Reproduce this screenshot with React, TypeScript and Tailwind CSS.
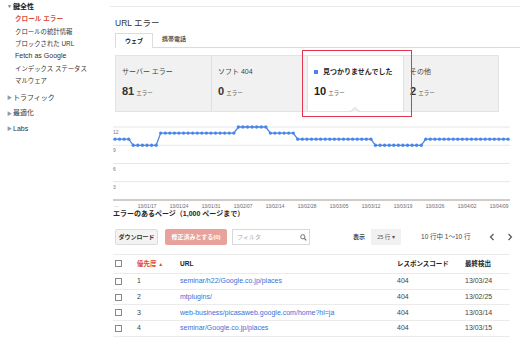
import React from 'react';

// One dot per day; [count, value] segments read off the chart
const segments: [number, number][] = [
  [4, 10], [6, 9], [17, 11], [7, 12], [6, 11], [17, 10], [11, 9], [19, 10],
];
const series: number[] = segments.flatMap(([n, v]) => Array(n).fill(v));

const xLabels = [
  '13/01/17', '13/01/24', '13/01/31', '13/02/07', '13/02/14', '13/02/28',
  '13/03/05', '13/03/12', '13/03/19', '13/03/26', '13/04/02', '13/04/09',
];

const rows = [
  { n: 1, url: 'seminar/h22/Google.co.jp/places', code: '404', date: '13/03/24' },
  { n: 2, url: 'mtplugins/', code: '404', date: '13/02/25' },
  { n: 3, url: 'web-business/picasaweb.google.com/home?hl=ja', code: '404', date: '13/03/14' },
  { n: 4, url: 'seminar/Google.co.jp/places', code: '404', date: '13/03/15' },
];

function Sidebar() {
  const sub = ['クロールの統計情報', 'ブロックされた URL', 'Fetch as Google', 'インデックス ステータス', 'マルウェア'];
  return (
    <div className="w-[110px] shrink-0 text-[7px] text-[#333] pt-[1px]">
      <div className="h-[12px] flex items-center pl-[7px] font-bold text-[#222]">
        <span className="text-[5px] text-[#777] w-[6px]">▼</span>鍵全性
      </div>
      <div className="h-[12.4px] flex items-center pl-[15px] font-bold text-[#dd4b39] text-[6.6px]">クロール エラー</div>
      {sub.map((s) => (
        <div key={s} className={`h-[12.4px] flex items-center pl-[15px] ${s.startsWith('Fetch') ? '' : 'text-[6.4px]'}`}>{s}</div>
      ))}
      {['トラフィック', '最適化', 'Labs'].map((s, i) => (
        <div key={s} className={`h-[15.5px] flex items-center pl-[7px] ${i === 0 ? 'mt-[3px]' : ''}`}>
          <span className="text-[5px] text-[#999] w-[6px]">▶</span>{s}
        </div>
      ))}
    </div>
  );
}

function Cards() {
  return (
    <div className="ml-[5px] mt-[7px] w-[384px] h-[57px] flex bg-[#f1f1f1] border border-[#e3e3e3]">
      <div className="w-[96px] border-r border-[#e0e0e0] pl-[6px] pt-[11px]">
        <div className="text-[7px] text-[#444] leading-[10px]">サーバー エラー</div>
        <div className="mt-[6px] flex items-baseline"><span className="text-[11px] font-bold text-[#333]">81</span><span className="text-[5.5px] text-[#666] ml-[2px]">エラー</span></div>
      </div>
      <div className="w-[96px] border-r border-[#e0e0e0] pl-[6px] pt-[11px]">
        <div className="text-[7px] text-[#444] leading-[10px]">ソフト 404</div>
        <div className="mt-[6px] flex items-baseline"><span className="text-[11px] font-bold text-[#333]">0</span><span className="text-[5.5px] text-[#666] ml-[2px]">エラー</span></div>
      </div>
      <div className="relative w-[96px] bg-white border-r border-[#e0e0e0] pl-[6px] pt-[11px]">
        <div className="text-[7px] font-bold text-[#222] leading-[10px] flex items-center">
          <span className="w-[4px] h-[4px] bg-[#4a86e8] mr-[5px]" />見つかりませんでした
        </div>
        <div className="mt-[6px] flex items-baseline"><span className="text-[11px] font-bold text-[#222]">10</span><span className="text-[5.5px] text-[#666] ml-[2px]">エラー</span></div>
        <svg className="absolute left-[42px] bottom-[-1px]" width="10" height="5" viewBox="0 0 10 5">
          <path d="M0 5 L5 0.5 L10 5" fill="#f1f1f1" stroke="#d6d6d6" strokeWidth="1" />
        </svg>
      </div>
      <div className="flex-1 pl-[6px] pt-[11px]">
        <div className="text-[7px] text-[#444] leading-[10px]">その他</div>
        <div className="mt-[6px] flex items-baseline"><span className="text-[11px] font-bold text-[#333]">2</span><span className="text-[5.5px] text-[#666] ml-[2px]">エラー</span></div>
      </div>
    </div>
  );
}

function Chart() {
  const px = (i: number) => 5 + i * 4.57;
  const py = (v: number) => 82 - v * 6.083;
  const pts = series.map((v, i) => `${px(i).toFixed(1)},${py(v).toFixed(1)}`).join(' ');
  return (
    <svg width="410" height="92" className="block mt-[6px]">
      {[12, 9, 6, 3].map((v) => (
        <g key={v}>
          <line x1="3" x2="400" y1={py(v)} y2={py(v)} stroke="#e6e6e6" strokeWidth="1" />
          <text x="3" y={py(v) + 7} fontSize="5" fill="#777">{v}</text>
        </g>
      ))}
      <line x1="3" x2="400" y1="82" y2="82" stroke="#9a9a9a" strokeWidth="1" />
      <text x="4" y="89" fontSize="5" fill="#777">...</text>
      {xLabels.map((l, k) => (
        <text key={l} x={37 + 32 * k} y="90" fontSize="4.8" fill="#666" textAnchor="middle">{l}</text>
      ))}
      <polyline points={pts} fill="none" stroke="#4a86e8" strokeWidth="1.3" />
      {series.map((v, i) => (
        <circle key={i} cx={px(i)} cy={py(v)} r="1.7" fill="#4a86e8" />
      ))}
    </svg>
  );
}

function Checkbox() {
  return <span className="block w-[7px] h-[7px] border border-[#888] bg-white" />;
}

function Table() {
  return (
    <div className="mt-[8px] ml-[3px] w-[397px] text-[7px]">
      <div className="grid grid-cols-[22px_44px_216px_68px_1fr] h-[20px] items-center border-t border-b border-[#ebebeb] font-bold text-[6.5px] text-[#222]">
        <div className="pl-[2px]"><Checkbox /></div>
        <div className="pl-[2px] text-[#dd4b39]">優先度 <span className="text-[5px]">▲</span></div>
        <div className="pl-[1px]">URL</div>
        <div className="pl-[2px]">レスポンスコード</div>
        <div className="pl-[2px]">最終検出</div>
      </div>
      {rows.map((r) => (
        <div key={r.n} className="grid grid-cols-[22px_44px_216px_68px_1fr] h-[15.8px] items-center border-b border-[#ebebeb] text-[#444]">
          <div className="pl-[2px]"><Checkbox /></div>
          <div className="pl-[2px]">{r.n}</div>
          <div className="pl-[1px] text-[#3a6fd8] whitespace-nowrap">{r.url}</div>
          <div className="pl-[2px]">{r.code}</div>
          <div className="pl-[2px]">{r.date}</div>
        </div>
      ))}
    </div>
  );
}

export default function App() {
  return (
    <div className="relative w-[520px] h-[337px] overflow-hidden bg-white flex font-['Liberation_Sans','Noto_Sans_CJK_JP',sans-serif]">
      <Sidebar />
      <div className="flex-1 flex flex-col">
        <div className="h-[7px] border-b border-[#ebebeb]" />
        <div className="mt-[11px] ml-[5px] text-[8.5px] leading-[10px] text-[#333]">URL エラー</div>
        {/* Tabs */}
        <div className="mt-[5px] ml-[5px] h-[15px] flex items-end border-b border-[#dcdcdc]">
          <div className="w-[38px] h-[15px] bg-white border border-b-0 border-[#dcdcdc] mb-[-1px] flex items-center justify-center text-[6px] font-bold text-[#222]">ウェブ</div>
          <div className="ml-[9px] h-[15px] flex items-center text-[6px] font-bold text-[#555]">携帯電話</div>
        </div>
        <Cards />
        <Chart />
        <div className="ml-[3px] mt-[-1px] text-[7px] font-bold text-[#222] leading-[10px]">エラーのあるページ（1,000 ページまで）</div>
        {/* Toolbar */}
        <div className="mt-[10px] ml-[5px] h-[17px] flex items-center text-[6px]">
          <div className="w-[43px] h-[16px] bg-[#f3f3f3] border border-[#dcdcdc] rounded-[2px] flex items-center justify-center font-bold text-[#333]">ダウンロード</div>
          <div className="ml-[7px] w-[62px] h-[16px] bg-[#e8a29b] rounded-[2px] flex items-center justify-center font-bold text-white">修正済みとする(0)</div>
          <div className="ml-[5px] w-[78px] h-[16px] border border-[#d9d9d9] flex items-center justify-between pl-[4px] pr-[2px] text-[#aaa]">
            フィルタ
            <svg width="7" height="7" viewBox="0 0 10 10"><circle cx="4" cy="4" r="3" fill="none" stroke="#666" strokeWidth="1.3" /><line x1="6.2" y1="6.2" x2="9" y2="9" stroke="#666" strokeWidth="1.5" /></svg>
          </div>
          <div className="ml-[43px] font-bold text-[#444]">表示</div>
          <div className="ml-[6px] w-[30px] h-[16px] bg-[#f1f1f1] flex items-center justify-center text-[5.5px] text-[#555]">25 行 ▾</div>
          <div className="ml-[20px] text-[6.5px] text-[#444]">10 行中 1～10 行</div>
          <svg className="ml-[18px]" width="6" height="8" viewBox="0 0 6 8"><path d="M4.5 1 L1.5 4 L4.5 7" fill="none" stroke="#555" strokeWidth="1.2" /></svg>
          <svg className="ml-[12px]" width="6" height="8" viewBox="0 0 6 8"><path d="M1.5 1 L4.5 4 L1.5 7" fill="none" stroke="#555" strokeWidth="1.2" /></svg>
        </div>
        <Table />
      </div>
      {/* annotation box around the selected card */}
      <div className="absolute left-[302px] top-[50px] w-[110px] h-[67px] border-[1.5px] border-[#e5344f]" />
    </div>
  );
}
